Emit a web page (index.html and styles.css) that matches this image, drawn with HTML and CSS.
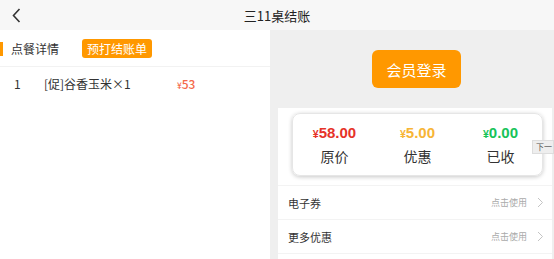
FILE: index.html
```html
<!DOCTYPE html>
<html lang="zh-CN">

<head>
    <meta charset="UTF-8">
    <meta name="viewport" content="width=device-width, initial-scale=1.0">
    <title>三11桌结账</title>
    <link rel="stylesheet" href="styles.css">
</head>

<body>
    <div class="topbar">
        <span class="back">
            <svg width="9" height="15" viewBox="0 0 9 15">
                <path d="M7.5 1 L1.5 7.5 L7.5 14" fill="none" stroke="#333" stroke-width="1.6" />
            </svg>
        </span>
        <h1 class="title">三11桌结账</h1>
        <span></span>
    </div>

    <div class="main">
        <div class="left">
            <div class="tabs">
                <span class="tab-mark"></span>
                <span class="tab-name">点餐详情</span>
                <span class="pre-bill">预打结账单</span>
            </div>
            <ul class="dish-list">
                <li>
                    <span class="dish-no">1</span>
                    <span class="dish-name">[促]谷香玉米×1</span>
                    <span class="dish-price"><small>¥</small>53</span>
                </li>
            </ul>
        </div>

        <div class="right">
            <div class="login-box">
                <button class="login-btn">会员登录</button>
            </div>
            <div class="pay-panel">
                <div class="sum-card">
                    <div class="sum-item">
                        <b class="red"><small>¥</small>58.00</b>
                        <span>原价</span>
                    </div>
                    <div class="sum-item">
                        <b class="orange"><small>¥</small>5.00</b>
                        <span>优惠</span>
                    </div>
                    <div class="sum-item">
                        <b class="green"><small>¥</small>0.00</b>
                        <span>已收</span>
                    </div>
                </div>
                <ul class="options">
                    <li>
                        <span class="opt-name">电子券</span>
                        <span class="opt-use">点击使用</span>
                        <svg width="7" height="11" viewBox="0 0 7 11">
                            <path d="M1 1 L5.5 5.5 L1 10" fill="none" stroke="#c4c4c4" stroke-width="1" />
                        </svg>
                    </li>
                    <li>
                        <span class="opt-name">更多优惠</span>
                        <span class="opt-use">点击使用</span>
                        <svg width="7" height="11" viewBox="0 0 7 11">
                            <path d="M1 1 L5.5 5.5 L1 10" fill="none" stroke="#c4c4c4" stroke-width="1" />
                        </svg>
                    </li>
                </ul>
                <span class="tip">下一</span>
            </div>
        </div>
    </div>
</body>

</html>
```

FILE: styles.css
```css
* {
    margin: 0;
    padding: 0;
}

body {
    width: 554px;
    height: 259px;
    overflow: hidden;
    font-family: "Noto Sans CJK SC", "Noto Sans", sans-serif;
    color: #333;
    background: #efefef;
}

ul {
    list-style: none;
}

.topbar {
    height: 30px;
    background: #f7f7f7;
    display: grid;
    grid-template-columns: 40px 1fr 40px;
    align-items: center;
}

.back {
    display: flex;
    padding-left: 12px;
}

.title {
    font-size: 13px;
    font-weight: normal;
    text-align: center;
    color: #222;
}

.main {
    display: flex;
    height: 229px;
}

.left {
    width: 270px;
    background: #fff;
}

.tabs {
    height: 36px;
    display: flex;
    align-items: center;
    border-bottom: 1px solid #f2f2f2;
}

.tab-mark {
    width: 3px;
    height: 14px;
    background: #ff9800;
    margin-top: 1px;
}

.tab-name {
    font-size: 12px;
    margin-left: 8px;
    margin-top: 1px;
}

.pre-bill {
    margin-left: 23px;
    margin-top: 1px;
    height: 19px;
    line-height: 19px;
    padding: 0 5px;
    border-radius: 3px;
    background: #ff9800;
    color: #fff;
    font-size: 12px;
}

.dish-list li {
    display: flex;
    align-items: center;
    height: 32px;
    font-size: 12px;
}

.dish-no {
    width: 44px;
    padding-left: 14px;
    box-sizing: border-box;
}

.dish-name {
    width: 133px;
}

.dish-price {
    color: #f4694a;
    font-weight: 500;
}

.dish-price small,
.sum-item small {
    font-size: 0.7em;
}

.right {
    flex: 1;
    display: flex;
    flex-direction: column;
    padding-left: 8px;
    padding-right: 2px;
}

.login-box {
    height: 78px;
    display: flex;
    align-items: center;
    justify-content: center;
}

.login-btn {
    width: 89px;
    height: 38px;
    border: none;
    border-radius: 6px;
    background: #ff9800;
    color: #fff;
    font-family: inherit;
    font-size: 15px;
    margin-left: 3px;
}

.pay-panel {
    flex: 1;
    background: #fff;
    position: relative;
    padding-top: 5px;
}

.sum-card {
    display: flex;
    height: 63px;
    margin: 0 9px 0 14px;
    border-radius: 8px;
    box-sizing: border-box;
    border: 1px solid #e6e6e6;
    box-shadow: 0 1px 4px rgba(0, 0, 0, 0.22);
}

.sum-item {
    flex: 1;
    display: flex;
    flex-direction: column;
    align-items: center;
    justify-content: center;
    gap: 3px;
}

.sum-item b {
    font-family: "Liberation Sans", "Noto Sans CJK SC", sans-serif;
    font-size: 15px;
    line-height: 18px;
}

.sum-item span {
    font-size: 14px;
    line-height: 20px;
}

.red {
    color: #e63329;
}

.orange {
    color: #f7b536;
}

.green {
    color: #17c35a;
}

.options {
    margin-top: 9px;
    border-top: 1px solid #f3f3f3;
}

.options li {
    height: 33px;
    display: flex;
    align-items: center;
    border-bottom: 1px solid #f3f3f3;
    padding: 0 8px 0 10px;
}

.opt-name {
    flex: 1;
    font-size: 11px;
}

.opt-use {
    font-size: 9px;
    color: #aaa;
    margin-right: 10px;
}

.tip {
    position: absolute;
    right: -2px;
    top: 32px;
    height: 12px;
    line-height: 12px;
    padding: 0 1px 0 3px;
    background: #eee;
    border: 1px solid #ddd;
    font-size: 8px;
    color: #555;
}
```
